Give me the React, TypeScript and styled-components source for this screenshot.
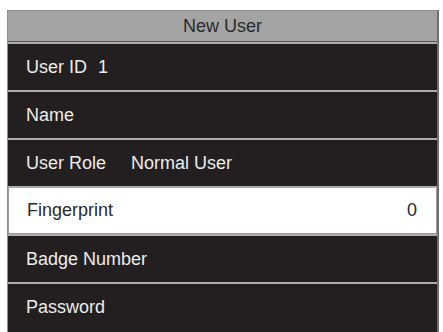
import React from "react"
import styled, { createGlobalStyle } from "styled-components"

const GlobalStyle = createGlobalStyle`
  html, body {
    margin: 0;
    padding: 0;
    background: #ffffff;
  }
  body {
    font-family: "Liberation Sans", Arial, sans-serif;
  }
`

type Item = {
  label: string
  value?: string
  gap?: number
  right?: boolean
  selected?: boolean
}

const items: Item[] = [
  { label: "User ID", value: "1", gap: 11 },
  { label: "Name" },
  { label: "User Role", value: "Normal User", gap: 25 },
  { label: "Fingerprint", value: "0", right: true, selected: true },
  { label: "Badge Number" },
  { label: "Password" },
]

function App() {
  return (
    <>
      <GlobalStyle />
      <Screen>
        <Frame>
          <Header>New User</Header>
          {items.map((item) => (
            <Row key={item.label} $selected={item.selected}>
              <Label>{item.label}</Label>
              {item.value && (
                <Value $gap={item.gap ?? 0} $right={item.right}>
                  {item.value}
                </Value>
              )}
            </Row>
          ))}
        </Frame>
      </Screen>
    </>
  )
}

export default App

const Screen = styled.div`
  width: 443px;
  height: 332px;
  padding: 10px 4px 0 7px;
  box-sizing: border-box;
  overflow: hidden;
`

const Frame = styled.div`
  display: flex;
  flex-direction: column;
  height: 100%;
  border: 1px solid #8c8c8c;
  border-right: 2px solid #6f6f6f;
  border-bottom: none;
  background: #231f20;
  box-sizing: border-box;
`

const Header = styled.div`
  height: 30px;
  flex: none;
  display: flex;
  align-items: center;
  justify-content: center;
  background: #a4a4a4;
  color: #2b2b2b;
  font-size: 18px;
  border-bottom: 1px solid #5a5a5a;
`

const Row = styled.div<{ $selected?: boolean }>`
  height: 48px;
  flex: none;
  display: flex;
  align-items: center;
  padding: 0 19px 0 18px;
  box-sizing: border-box;
  font-size: 18px;
  color: ${(p) => (p.$selected ? "#2a2a2a" : "#ececec")};
  background: ${(p) => (p.$selected ? "#ffffff" : "#231f20")};
  border-top: 2px solid #acacac;
  ${(p) => p.$selected && "border: 1px solid #9a9a9a; border-top: 2px solid #acacac;"}

  &:first-of-type {
    border-top: none;
  }
`

const Label = styled.span`
  white-space: nowrap;
`

const Value = styled.span<{ $gap: number; $right?: boolean }>`
  margin-left: ${(p) => (p.$right ? "auto" : `${p.$gap}px`)};
  white-space: nowrap;
`
